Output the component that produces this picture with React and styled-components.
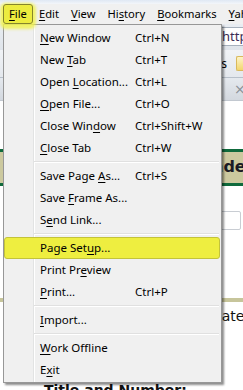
import React from 'react';
import styled, { createGlobalStyle } from 'styled-components';

const Global = createGlobalStyle`
  html, body { margin: 0; padding: 0; }
  body {
    width: 243px; height: 390px; overflow: hidden; background: #fff;
    font-family: "Noto Sans", "Open Sans", "Liberation Sans", sans-serif;
  }
  #root { width: 243px; height: 390px; }
`;

const uiFont = `"Noto Sans", "Open Sans", "Liberation Sans", sans-serif`;

const Window = styled.div`
  position: relative;
  width: 243px;
  height: 390px;
  overflow: hidden;
  background: #fff;
  display: flex;
  flex-direction: column;
`;

const TitleEdge = styled.div`
  flex: none;
  height: 4px;
  background: linear-gradient(#dfe8f4, #f3f6fa);
`;

const MenuBar = styled.div`
  flex: none;
  height: 20px;
  display: flex;
  align-items: center;
  padding-left: 3px;
  background: #f0f0f0;
  white-space: nowrap;
`;

const MenuTitle = styled.span`
  position: relative;
  z-index: ${p => (p.$active ? 5 : 0)};
  box-sizing: border-box;
  height: 20px;
  padding: 0 5px;
  font: 11.2px/18px ${uiFont};
  color: #000;
  border: 1px solid ${p => (p.$active ? '#85852c' : 'transparent')};
  border-radius: 3px;
  background: ${p => (p.$active ? '#ecec3e' : 'transparent')};
  box-shadow: ${p => (p.$active ? '0 2px 3px 3px rgba(240, 242, 80, 0.85)' : 'none')};
`;

const U = styled.span`
  text-decoration: underline;
  text-underline-offset: 2px;
`;

const NavBar = styled.div`
  flex: none;
  height: 26px;
  box-sizing: border-box;
  padding: 3px 0 4px 200px;
  background: linear-gradient(#e9edf2, #dfe4ea);
  display: flex;
`;

const Address = styled.div`
  flex: 1;
  box-sizing: border-box;
  border: 1px solid #a7b1bd;
  border-right: none;
  background: #fff;
  padding-left: 21px;
  font: 13px/17px ${uiFont};
  color: #3b2d55;
  white-space: nowrap;
  overflow: hidden;
`;

const BookmarksBar = styled.div`
  flex: none;
  height: 28px;
  box-sizing: border-box;
  border-bottom: 1px solid #b8c0ca;
  background: linear-gradient(#f1f3f6, #e4e8ed);
  display: grid;
  grid-template-columns: 227px 1fr;
  align-items: center;
  column-gap: 9px;
`;

const BookmarkLabel = styled.span`
  text-align: right;
  font: 12px/16px ${uiFont};
  color: #000;
  white-space: nowrap;
  overflow: hidden;
`;

const FolderButton = styled.span`
  display: block;
  height: 15px;
  box-sizing: border-box;
  border: 1px solid #d9b95c;
  border-right: none;
  border-radius: 2px 0 0 2px;
  background: linear-gradient(#fdf4c8, #f2d66e);
`;

const TabStrip = styled.div`
  flex: none;
  height: 22px;
  background: linear-gradient(#e5e9ee, #d3d8df);
  border-bottom: 1px solid #c2c8d0;
  display: grid;
  grid-template-columns: 234px 1fr;
  align-items: center;
`;

const TabClose = styled.span`
  grid-column: 2;
  font: 14px/14px "DejaVu Sans", sans-serif;
  color: #8a8f96;
`;

const Content = styled.div`
  flex: 1;
  display: flex;
  flex-direction: column;
  background: #fff;
`;

const SectionHeading = styled.div`
  margin-top: 48px;
  height: 31px;
  border-top: 3px solid #0f6a3c;
  border-bottom: 3px solid #0f6a3c;
  background: #ccc99f;
  padding-left: 199px;
  font: bold 16px/29px "DejaVu Sans", sans-serif;
  color: #1b1b25;
  white-space: nowrap;
  overflow: hidden;
`;

const FieldRow = styled.div`
  margin-top: 25px;
  padding-left: 150px;
  display: flex;
`;

const Field = styled.div`
  width: 91px;
  height: 19px;
  box-sizing: border-box;
  border: 1px solid #c9cdd3;
  border-radius: 2px;
  background: #fff;
`;

const Rule = styled.div`
  margin-top: 68px;
  height: 4px;
  background: #c7c59b;
`;

const FieldLabel = styled.div`
  margin-top: 6px;
  padding-left: 211px;
  font: 14px/17px "DejaVu Sans", sans-serif;
  color: #111;
  white-space: nowrap;
`;

const BigLabel = styled.div`
  margin-top: 56px;
  padding-left: 44px;
  font: bold 14px/18px "DejaVu Sans", sans-serif;
  color: #111;
  white-space: nowrap;
`;

const Dropdown = styled.div`
  position: absolute;
  z-index: 4;
  left: 3px;
  top: 24px;
  width: 219px;
  box-sizing: border-box;
  border: 1px solid #979797;
  padding: 2px 0 1px;
  background: linear-gradient(to right, #f0f0f0 0 29px, #e2e3e3 29px 30px, #ffffff 30px 31px, #f0f0f0 31px);
  box-shadow: 2px 2px 2px rgba(0, 0, 0, 0.45);
`;

const Row = styled.div`
  box-sizing: border-box;
  height: 22px;
  margin-right: 1px;
  padding-left: 35px;
  display: grid;
  grid-template-columns: 95px 1fr;
  align-items: center;
  font: 11.5px/16px ${uiFont};
  color: #000;
  white-space: nowrap;
  border: 1px solid ${p => (p.$hot ? '#c3c33a' : 'transparent')};
  border-radius: 3px;
  background: ${p => (p.$hot ? '#eeee40' : 'transparent')};
`;

const Separator = styled.div`
  height: 2px;
  margin: 2px 2px 2px 30px;
  border-top: 1px solid #e0e0e0;
  background: #fff;
  box-sizing: border-box;
`;

const Key = styled.span``;

const label = (text, idx) =>
  idx < 0 ? text : (
    <>
      {text.slice(0, idx)}
      <U>{text[idx]}</U>
      {text.slice(idx + 1)}
    </>
  );

const menus = [
  ['File', 0, true],
  ['Edit', 0],
  ['View', 0],
  ['History', 2],
  ['Bookmarks', 0],
  ['Yahoo!', 0],
];

const items = [
  ['New Window', 0, 'Ctrl+N'],
  ['New Tab', 4, 'Ctrl+T'],
  ['Open Location...', 5, 'Ctrl+L'],
  ['Open File...', 0, 'Ctrl+O'],
  ['Close Window', 9, 'Ctrl+Shift+W'],
  ['Close Tab', 0, 'Ctrl+W'],
  'sep',
  ['Save Page As...', 10, 'Ctrl+S'],
  ['Save Frame As...', 5, ''],
  ['Send Link...', 1, ''],
  'sep',
  ['Page Setup...', 8, '', true],
  ['Print Preview', 8, ''],
  ['Print...', 0, 'Ctrl+P'],
  'sep',
  ['Import...', 0, ''],
  'sep',
  ['Work Offline', 0, ''],
  ['Exit', 1, ''],
];

export default function App() {
  return (
    <>
      <Global />
      <Window>
        <TitleEdge />
        <MenuBar>
          {menus.map(([t, i, a]) => (
            <MenuTitle key={t} $active={a}>{label(t, i)}</MenuTitle>
          ))}
        </MenuBar>
        <NavBar>
          <Address>http://www.example.edu/forms/application.html</Address>
        </NavBar>
        <BookmarksBar>
          <BookmarkLabel>Latest Headlines</BookmarkLabel>
          <FolderButton />
        </BookmarksBar>
        <TabStrip>
          <TabClose>×</TabClose>
        </TabStrip>
        <Content>
          <SectionHeading>Understanding</SectionHeading>
          <FieldRow><Field /></FieldRow>
          <Rule />
          <FieldLabel>Date</FieldLabel>
          <BigLabel>Title and Number:</BigLabel>
        </Content>
        <Dropdown>
          {items.map((it, n) =>
            it === 'sep' ? (
              <Separator key={n} />
            ) : (
              <Row key={n} $hot={it[3]}>
                <span>{label(it[0], it[1])}</span>
                <Key>{it[2]}</Key>
              </Row>
            )
          )}
        </Dropdown>
      </Window>
    </>
  );
}
